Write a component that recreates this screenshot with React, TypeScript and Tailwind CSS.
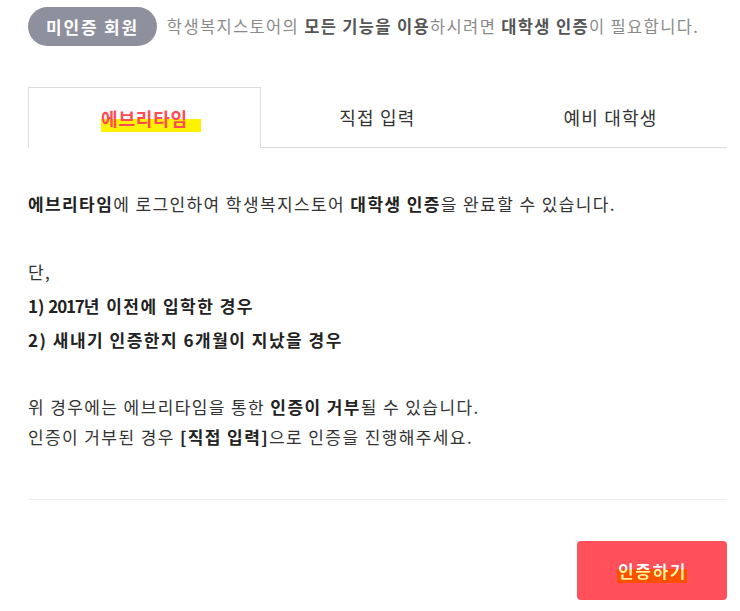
import { useState } from "react";

const tabs = ["에브리타임", "직접 입력", "예비 대학생"];

export default function App() {
  const [active, setActive] = useState(0);

  return (
    <div className="min-h-screen bg-white text-[#333] [font-family:'Noto_Sans_CJK_KR','Noto_Sans',sans-serif]">
      <div className="ml-[28px] w-[699px] pt-[7px]">
        {/* Header */}
        <div className="flex items-center gap-[10px]">
          <span className="flex h-[39px] items-center rounded-full bg-[#8f909e] px-[18px] text-[17px] font-bold tracking-[1.8px] text-white">
            미인증 회원
          </span>
          <p className="text-[16.5px] tracking-[1.35px] text-[#8a8a8a]">
            학생복지스토어의 <b className="font-bold text-[#555]">모든 기능을 이용</b>하시려면{" "}
            <b className="font-bold text-[#555]">대학생 인증</b>이 필요합니다.
          </p>
        </div>

        {/* Tabs */}
        <div className="mt-[41px] grid grid-cols-3">
          {tabs.map((t, i) =>
            i === active ? (
              <button
                key={t}
                onClick={() => setActive(i)}
                className="flex h-[61px] items-center justify-center border border-b-0 border-[#dcdce0] bg-white"
              >
                <span className="mr-[-13px] bg-[linear-gradient(transparent_52%,#fff200_52%,#fff200_100%)] pr-[13px] text-[18px] font-semibold tracking-[0.8px] text-[#ff4b55]">
                  {t}
                </span>
              </button>
            ) : (
              <button
                key={t}
                onClick={() => setActive(i)}
                className="flex h-[61px] items-center justify-center border-b border-[#dcdce0] text-[18px] tracking-[1.2px] text-[#333]"
              >
                {t}
              </button>
            )
          )}
        </div>

        {/* Body */}
        <div className="mt-[41px] text-[17px] tracking-[1.4px] text-[#333]">
          <p className="leading-[30px]">
            <b className="font-bold text-[#222]">에브리타임</b>에 로그인하여 학생복지스토어{" "}
            <b className="font-bold text-[#222]">대학생 인증</b>을 완료할 수 있습니다.
          </p>
          <div className="mt-[36px] leading-[34px]">
            <p>단,</p>
            <p className="font-bold tracking-[1.5px] text-[#222]">
              <span className="tracking-[0px]">1) </span>
              <span className="tracking-[-1.2px]">2017</span>년 이전에 입학한 경우
            </p>
            <p className="font-bold tracking-[1.5px] text-[#222]">2) 새내기 인증한지 6개월이 지났을 경우</p>
          </div>
          <div className="mt-[35px] leading-[30px]">
            <p>
              위 경우에는 에브리타임을 통한 <b className="font-bold text-[#222]">인증이 거부</b>될 수 있습니다.
            </p>
            <p>
              인증이 거부된 경우 <b className="font-bold text-[#222]">[직접 입력]</b>으로 인증을 진행해주세요.
            </p>
          </div>
        </div>

        <div className="mt-[47px] border-t border-[#ececec]" />

        <div className="mt-[41px] flex justify-end">
          <button className="flex h-[59px] w-[150px] items-center justify-center rounded-[4px] bg-[#ff505c]">
            <span className="bg-[linear-gradient(transparent_45%,#ff5000_45%,#ff5000_100%)] pl-[1px] text-[17px] font-bold tracking-[1.6px]">
              <span className="bg-[linear-gradient(#ffffff_50%,#fff59a_50%)] bg-clip-text text-transparent">
                인증하기
              </span>
            </span>
          </button>
        </div>
      </div>
    </div>
  );
}
